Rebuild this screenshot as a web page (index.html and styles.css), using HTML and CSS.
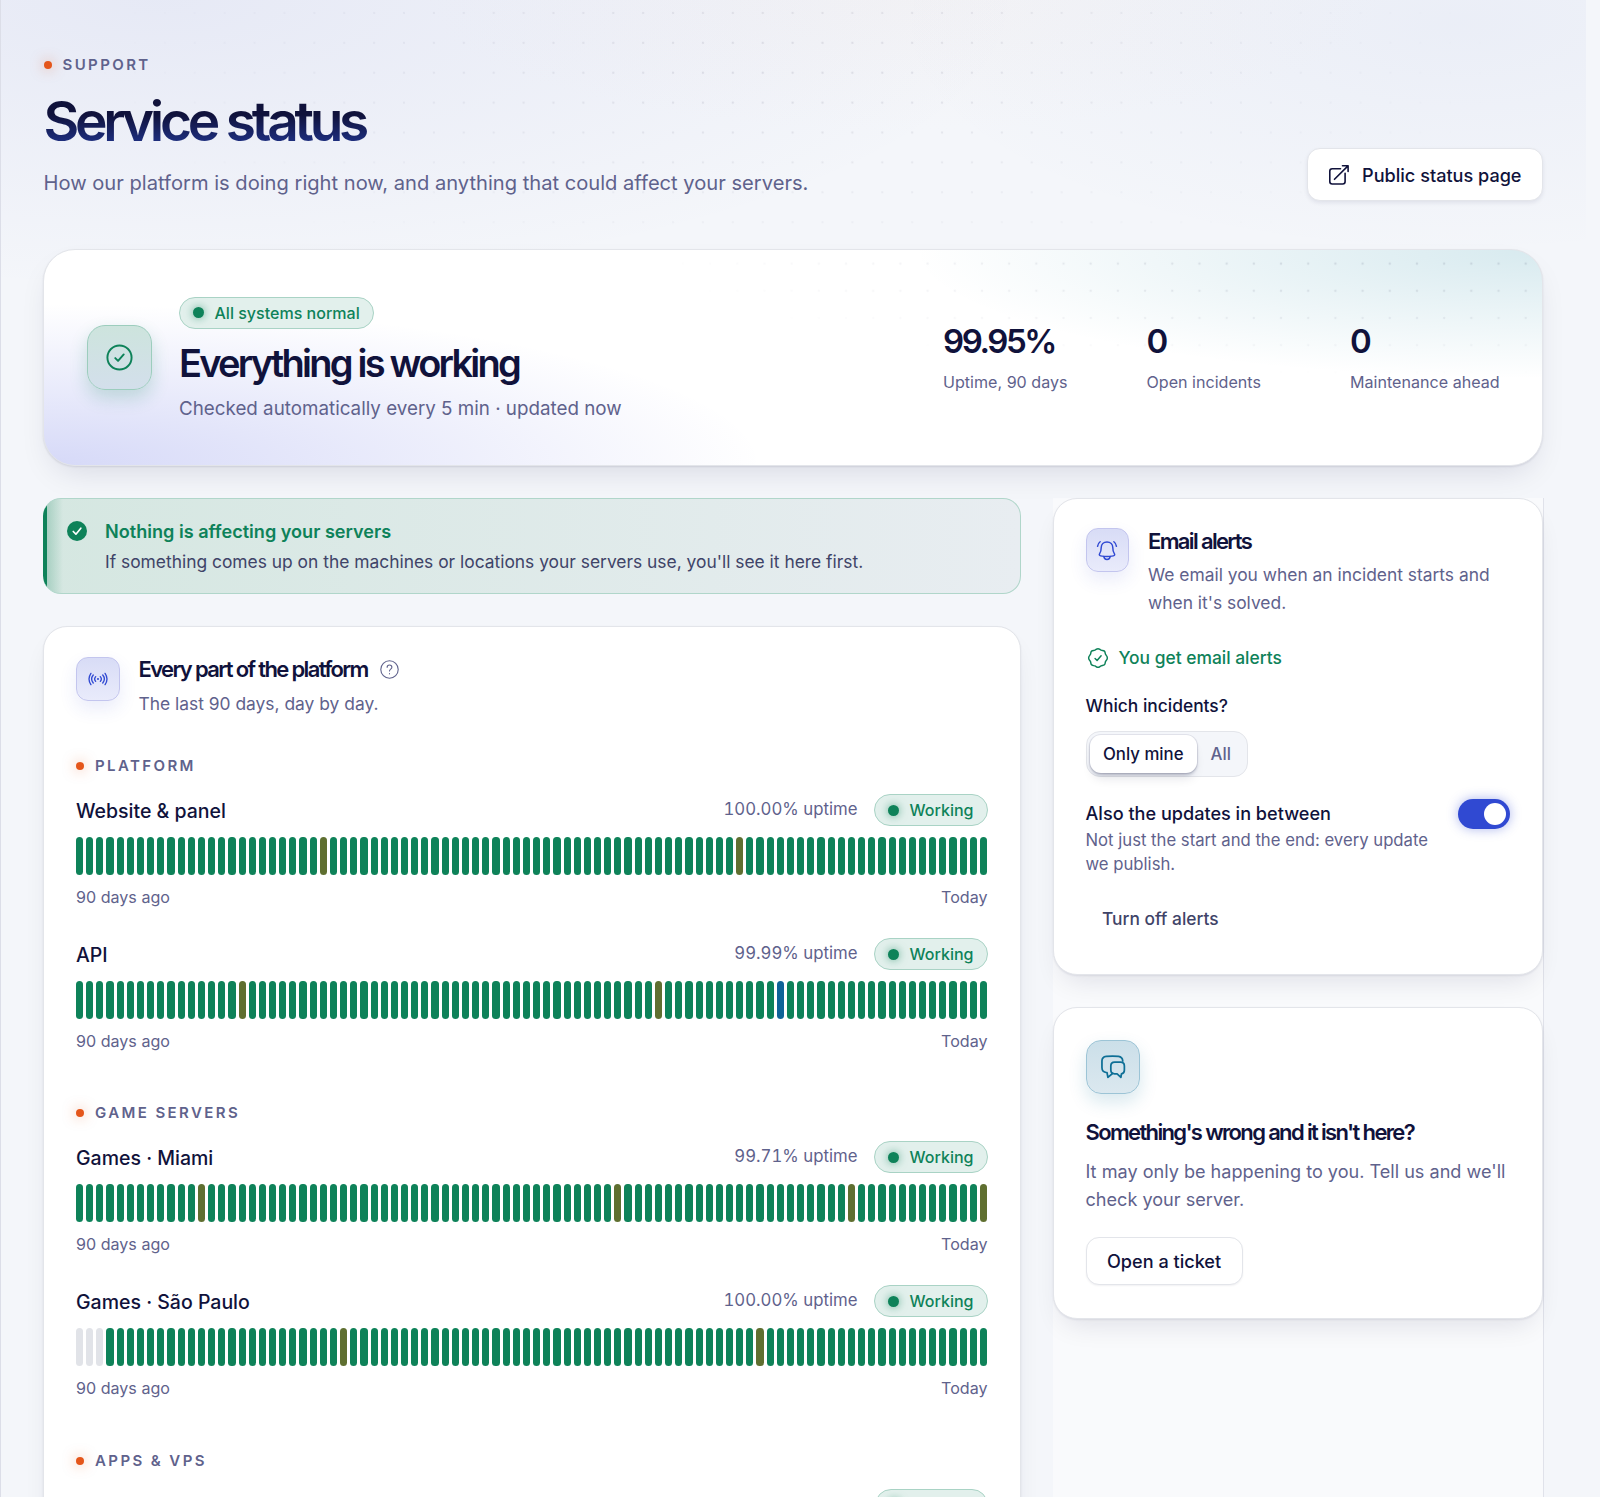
FILE: index.html
```html
<!DOCTYPE html>
<html lang="en">
<head>
  <meta charset="UTF-8" />
  <meta name="viewport" content="width=device-width, initial-scale=1.0" />
  <title>Service status</title>
  <link rel="stylesheet" href="styles.css">
</head>

<body>

<main class="page">

  <!-- Header -->
  <header class="hero">
    <div>
      <p class="eyebrow">Support</p>
      <h1>Service status</h1>
      <p class="lead">How our platform is doing right now, and anything that could affect your servers.</p>
    </div>
    <a class="btn btn-large" href="#">
      <svg class="icon" viewBox="0 0 22 22"><path d="M12.500 4.700H4.200C2.600 4.700 1.800 5.500 1.800 7.100V17.600C1.800 19.200 2.600 20 4.200 20H14.700C16.300 20 17.100 19.200 17.100 17.600V9.300"/><path d="M6.500 15.300 20 1.900M14.500 1.800H20.100V7.400"/></svg>
      Public status page
    </a>
  </header>

  <!-- Overall status -->
  <section class="summary">
    <div class="tile tile-green tile-big">
      <svg class="icon" viewBox="0 0 24 24"><circle cx="12" cy="12" r="10"/><path d="M8.500 12.500 10.800 14.800 15.500 9.500"/></svg>
    </div>
    <div class="summary-text">
      <span class="badge">All systems normal</span>
      <h2>Everything is working</h2>
      <p>Checked automatically every 5 min · updated now</p>
    </div>
    <dl class="stats">
      <div><dd>99.95%</dd><dt>Uptime, 90 days</dt></div>
      <div><dd>0</dd><dt>Open incidents</dt></div>
      <div><dd>0</dd><dt>Maintenance ahead</dt></div>
    </dl>
  </section>

  <div class="columns">
    <div class="main-col">

      <div class="notice">
        <svg class="notice-icon" viewBox="0 0 24 24"><circle cx="12" cy="12" r="12"/><path d="M7.500 12.600 10.700 15.800 16.600 8.600"/></svg>
        <div>
          <strong>Nothing is affecting your servers</strong>
          <p>If something comes up on the machines or locations your servers use, you'll see it here first.</p>
        </div>
      </div>

      <!-- Components -->
      <section class="card platform">
        <div class="card-head">
          <div class="tile tile-blue">
            <svg class="icon" viewBox="0 0 24 24"><circle cx="12" cy="12" r=".5"/><path d="M9.200 9.200c-1.400 1.600-1.400 4 0 5.600M14.800 9.200c1.400 1.600 1.400 4 0 5.600M6.300 7.200c-2.300 2.800-2.300 6.800 0 9.600M17.700 7.200c2.300 2.800 2.300 6.800 0 9.600M3.500 5.200c-2.700 4-2.700 9.600 0 13.600M20.500 5.200c2.700 4 2.700 9.600 0 13.600"/></svg>
          </div>
          <div>
            <h3>Every part of the platform
              <svg class="icon help" viewBox="0 0 24 24"><circle cx="12" cy="12" r="11"/><path d="M9 9.300c0-1.700 1.300-2.900 3-2.900s3 1.200 3 2.800c0 2.300-3 2.400-3 4.700M12 17.200v.3"/></svg>
            </h3>
            <p>The last 90 days, day by day.</p>
          </div>
        </div>

        <div class="group">
          <p class="eyebrow">Platform</p>
          <div class="service" data-name="Website &amp; panel" data-uptime="100.00%" data-degraded="24,65"></div>
          <div class="service" data-name="API" data-uptime="99.99%" data-degraded="16,57" data-maintenance="69"></div>
        </div>
        <div class="group">
          <p class="eyebrow">Game servers</p>
          <div class="service" data-name="Games · Miami" data-uptime="99.71%" data-degraded="12,53,76,89"></div>
          <div class="service" data-name="Games · São Paulo" data-uptime="100.00%" data-degraded="26,67" data-empty="0,1,2"></div>
        </div>
        <div class="group">
          <p class="eyebrow">Apps &amp; VPS</p>
          <div class="service-head"><span class="badge badge-end"></span></div>
        </div>
      </section>
    </div>

    <aside class="side-col">
      <!-- Email alerts -->
      <section class="card alerts">
        <div class="card-head">
          <div class="tile tile-blue">
            <svg class="icon" viewBox="0 0 24 24"><path d="M12 3.200c-3.700 0-6.300 2.700-6.300 6.200 0 3-.3 4.600-1.700 6.500-.8 1.100-.3 2.300 1 2.500 4.500.8 9.500.8 14 0 1.300-.2 1.800-1.400 1-2.500-1.400-1.900-1.700-3.500-1.700-6.500 0-3.500-2.600-6.200-6.300-6.200z"/><path d="M8.500 19c.2 1.900 1.600 3.300 3.500 3.300s3.300-1.400 3.500-3.300M4.500 3C2.900 4.200 1.900 5.900 1.700 8M19.500 3c1.600 1.200 2.600 2.900 2.800 5"/></svg>
          </div>
          <div>
            <h3>Email alerts</h3>
            <p>We email you when an incident starts and when it's solved.</p>
          </div>
        </div>

        <p class="subscribed">
          <svg class="icon" viewBox="0 0 24 24"><path d="M12 1.800c1.500 0 2.100 1.100 3.400 1.600s2.600.1 3.600 1.100.7 2.300 1.200 3.500 2 1.900 2 3.900-1.500 2.700-2 3.900-.1 2.600-1.200 3.600-2.300.7-3.600 1.200-1.900 1.600-3.400 1.600-2.100-1.100-3.400-1.600-2.600-.1-3.600-1.200-.7-2.400-1.200-3.600-2-1.900-2-3.900 1.500-2.700 2-3.900.1-2.500 1.200-3.500 2.300-.6 3.600-1.100S10.500 1.800 12 1.800z"/><path d="M8.800 12.600 11 14.800 15.400 9.500"/></svg>
          You get email alerts
        </p>

        <p class="field-label">Which incidents?</p>
        <div class="segmented">
          <button class="active">Only mine</button>
          <button>All</button>
        </div>

        <div class="switch-row">
          <div>
            <strong>Also the updates in between</strong>
            <p>Not just the start and the end: every update we publish.</p>
          </div>
          <button class="switch" aria-label="Also the updates in between"></button>
        </div>

        <button class="btn-text">Turn off alerts</button>
      </section>

      <!-- Ticket -->
      <section class="card ticket">
        <div class="tile tile-teal">
          <svg class="icon" viewBox="0 0 24 24"><path d="M6.500 17.300C3 16.500 1.800 15.800 1.800 12.500V6.500C1.800 3.500 2.800 2.500 5.800 2.200c3.800-.4 8-.4 11.300 0 2.600.3 3.700 1.200 3.900 4.300M6.500 17.300l.8 4.300 4.500-3.800"/><path d="M13.500 7.500h5.500c2.400 0 3.500 1 3.500 3.500v4c0 2.200-.8 3-2.700 3.300l-.5 3.300-3.500-3.300h-2.300c-2.500 0-3.500-1-3.500-3.500V11c0-2.500 1-3.500 3.500-3.500z"/></svg>
        </div>
        <h3>Something's wrong and it isn't here?</h3>
        <p>It may only be happening to you. Tell us and we'll check your server.</p>
        <a class="btn" href="#">Open a ticket</a>
      </section>
    </aside>
  </div>
</main>

<script>
  const DAYS = 90;

  function days(value) {
    return value ? value.split(',').map(Number) : [];
  }

  // Fill every service with its title row and one bar per day
  document.querySelectorAll('.service').forEach(el => {
    const degraded = days(el.dataset.degraded);
    const maintenance = days(el.dataset.maintenance);
    const empty = days(el.dataset.empty);
    let bars = '';
    for (let i = 0; i < DAYS; i++) {
      let state = '';
      if (degraded.includes(i)) state = 'degraded';
      if (maintenance.includes(i)) state = 'maintenance';
      if (empty.includes(i)) state = 'empty';
      bars += `<i class="${state}"></i>`;
    }
    el.innerHTML = `
      <div class="service-head">
        <span class="service-name">${el.dataset.name}</span>
        <span class="uptime">${el.dataset.uptime} uptime</span>
        <span class="badge">Working</span>
      </div>
      <div class="bars">${bars}</div>
      <div class="range"><span>90 days ago</span><span>Today</span></div>`;
  });
</script>

</body>
</html>
```
FILE: styles.css
```css
* { margin: 0; padding: 0; box-sizing: border-box; }

:root {
  --ink: #10123b;
  --body: #3f4468;
  --muted: #5f628c;
  --green: #0e8259;
  --line: #e3e5ea;
}

html {
  height: 100%;
  overflow: hidden;
}

body {
  height: 100%;
  overflow: hidden;
  font-family: Inter, sans-serif;
  color: var(--ink);
  background: #f4f6fa;
}

.page {
  position: relative;
  border-left: 1px solid #dcdee8;
  padding: 55px 57px 0 42px;
  height: 100%;
  overflow: hidden;
}

/* soft colour behind the header */
.page::before {
  content: "";
  position: absolute;
  inset: 0 14px auto 0;
  height: 290px;
  background:
    radial-gradient(55% 100% at 10% 0%, rgba(60, 75, 190, 0.075), transparent),
    radial-gradient(36% 80% at 92% 8%, rgba(60, 90, 190, 0.05), transparent),
    radial-gradient(30% 45% at 57% 0%, rgba(243, 242, 244, 0.8), transparent);
}

.page::after {
  content: "";
  position: absolute;
  inset: 0 14px auto 0;
  height: 240px;
  background: radial-gradient(circle, rgba(16, 18, 59, 0.09) 1px, transparent 1.6px) -0.5px -2px / 29.9px 29.9px;
  -webkit-mask-image: radial-gradient(50% 100% at 50% 30%, #000 10%, transparent 90%);
  mask-image: radial-gradient(50% 100% at 50% 30%, #000 10%, transparent 90%);
}

.page > * {
  position: relative;
  z-index: 1;
}

.icon {
  width: 22px;
  height: 22px;
  fill: none;
  stroke: currentColor;
  stroke-width: 1.6;
  stroke-linecap: round;
  stroke-linejoin: round;
  flex: none;
}

.eyebrow {
  display: flex;
  align-items: center;
  gap: 11px;
  font-size: 15px;
  line-height: 20px;
  font-weight: 600;
  letter-spacing: 0.16em;
  text-transform: uppercase;
  color: var(--muted);
}

.eyebrow::before {
  content: "";
  width: 8px;
  height: 8px;
  border-radius: 50%;
  background: #e4561b;
  box-shadow: 0 0 13px rgba(228, 86, 27, 0.5);
}

/* Header */
.hero {
  display: flex;
  justify-content: space-between;
  align-items: flex-end;
  height: 146px;
  padding-left: 0.5px;
}

.hero > div {
  align-self: flex-start;
}

h1 {
  margin-top: 14px;
  font-size: 55px;
  line-height: 64px;
  font-weight: 600;
  letter-spacing: -0.077em;
  background: linear-gradient(180deg, #10123b 40%, #233a9a);
  -webkit-background-clip: text;
  background-clip: text;
  color: transparent;
}

.lead {
  margin-top: 14px;
  font-size: 20.14px;
  line-height: 32px;
  color: var(--muted);
}

.btn {
  display: inline-flex;
  align-items: center;
  gap: 12px;
  height: 48px;
  padding: 0 20.5px;
  border: 1px solid var(--line);
  border-radius: 13px;
  background: #fff;
  box-shadow: 0 1px 2px rgba(16, 18, 59, 0.06);
  color: var(--ink);
  font-size: 18.1px;
  font-weight: 500;
  text-decoration: none;
}

.btn-large {
  height: 53px;
  box-shadow: 0 2px 4px rgba(16, 18, 59, 0.08);
}

/* Overall status */
.summary {
  display: flex;
  align-items: center;
  height: 217px;
  margin-top: 48px;
  padding: 0 42.5px;
  border: 1px solid var(--line);
  border-radius: 32px;
  background:
    radial-gradient(48% 75% at 0% 100%, rgba(60, 75, 220, 0.21), transparent),
    radial-gradient(42% 60% at 100% 0%, rgba(20, 130, 160, 0.17), transparent),
    #fff;
  box-shadow: 0 1px 2px rgba(16, 18, 59, 0.1), 0 14px 32px -10px rgba(16, 18, 59, 0.13);
}

.summary::after {
  content: "";
  position: absolute;
  inset: 0;
  border-radius: inherit;
  background: radial-gradient(circle, rgba(16, 18, 59, 0.1) 1px, transparent 1.6px) 0 0 / 27.2px 27.2px;
  -webkit-mask-image: radial-gradient(50% 60% at 90% 0%, #000 20%, transparent);
  mask-image: radial-gradient(50% 60% at 90% 0%, #000 20%, transparent);
}

.tile {
  display: flex;
  align-items: center;
  justify-content: center;
  flex: none;
  width: 43.5px;
  height: 43.5px;
  border: 1px solid;
  border-radius: 12px;
}

.tile-blue {
  color: #3049d2;
  border-color: #c3c5ee;
  background: linear-gradient(180deg, #d8dcf6, #e9ebfb);
  box-shadow: 0 8px 18px rgba(48, 73, 210, 0.1);
}

.platform .tile .icon {
  width: 20px;
  height: 20px;
}

.tile-green {
  color: var(--green);
  border-color: #9ccdbd;
  background: linear-gradient(180deg, #cde4dd, #d3dfeb);
  box-shadow: 0 8px 18px rgba(14, 130, 89, 0.2);
}

.tile-big {
  width: 65px;
  height: 65px;
  border-radius: 18px;
}

.tile-big .icon {
  width: 29px;
  height: 29px;
}

.tile-teal {
  width: 54px;
  height: 54px;
  border-radius: 15px;
  color: #0e6f96;
  border-color: #9cc4d6;
  background: linear-gradient(180deg, #cbdfe9, #dbe8ef);
  box-shadow: 0 8px 18px rgba(14, 111, 150, 0.16);
}

.tile-teal .icon {
  width: 26px;
  height: 26px;
}

.summary-text {
  margin: 5px 0 0 27.5px;
}

.badge {
  display: inline-flex;
  align-items: center;
  gap: 11px;
  height: 32px;
  padding: 0 13px 0 12.5px;
  border: 1px solid #a9d3c5;
  border-radius: 16px;
  background: #e2f0ec;
  color: var(--green);
  font-size: 16.05px;
  font-weight: 500;
}

.badge::before {
  content: "";
  width: 11px;
  height: 11px;
  border-radius: 50%;
  background: var(--green);
  box-shadow: 0 0 9px rgba(14, 130, 89, 0.6);
}

.summary-text h2 {
  margin-top: 10px;
  font-size: 38px;
  line-height: 48px;
  font-weight: 600;
  letter-spacing: -0.073em;
}

.summary-text p {
  margin-top: 8.5px;
  font-size: 18.8px;
  line-height: 28px;
  color: var(--muted);
}

.stats {
  display: flex;
  gap: 54px;
  margin-left: auto;
}

.stats div {
  width: 149.5px;
  white-space: nowrap;
}

.stats dd {
  font-size: 33px;
  line-height: 40px;
  font-weight: 600;
  letter-spacing: -0.073em;
}

.stats dt {
  margin-top: 9px;
  font-size: 16.1px;
  line-height: 24px;
  color: var(--muted);
}

/* Columns */
.columns {
  display: flex;
  gap: 32px;
  margin-top: 32px;
}

.main-col {
  width: 977.5px;
}

.side-col {
  width: 490.5px;
  height: 1100px;
  background: rgba(255, 255, 255, 0.45);
  box-shadow: 1px 0 0 #e0e2ea;
}

/* green edge on the left is painted so the corners clip it */
.notice {
  display: flex;
  gap: 18px;
  height: 96px;
  padding: 19px 24px;
  border: 1px solid #b0d6ca;
  border-left: 0;
  border-radius: 18px;
  background:
    linear-gradient(90deg, var(--green) 4px, rgba(14, 130, 89, 0.22) 4.5px, transparent 20px),
    linear-gradient(90deg, #d5e7e1, #e8edf1);
}

.notice-icon {
  flex: none;
  width: 20px;
  height: 20px;
  margin-top: 3px;
  fill: var(--green);
}

.notice-icon path {
  fill: none;
  stroke: #fff;
  stroke-width: 2;
  stroke-linecap: round;
  stroke-linejoin: round;
}

.notice strong {
  display: block;
  font-size: 18.1px;
  line-height: 27px;
  font-weight: 600;
  color: var(--green);
}

.notice p {
  margin-top: 3px;
  font-size: 17.4px;
  line-height: 28px;
  color: var(--body);
}

.card {
  padding: 30px 32px;
  border: 1px solid var(--line);
  border-radius: 24px;
  background: #fff;
  box-shadow: 0 1px 2px rgba(16, 18, 59, 0.08), 0 14px 28px -10px rgba(16, 18, 59, 0.12);
}

.platform {
  margin-top: 32px;
  height: 1000px;
}

.card-head {
  display: flex;
  gap: 19px;
}

.card h3 {
  font-size: 22px;
  line-height: 28px;
  font-weight: 600;
  letter-spacing: -0.075em;
}

.platform h3 {
  margin-top: -2px;
}

.help {
  width: 19px;
  height: 19px;
  margin-left: 8px;
  vertical-align: -1.5px;
  stroke-width: 1.4;
  color: var(--muted);
}

.card-head p,
.ticket p {
  margin-top: 6px;
  font-size: 17.4px;
  line-height: 28px;
  color: var(--muted);
}

.platform .card-head p {
  margin-top: 7px;
}

.group {
  display: flex;
  flex-direction: column;
  gap: 18px;
  margin-top: 49.4px;
}

.card-head + .group {
  margin-top: 38px;
}

.service + .service {
  margin-top: 10px;
}

.service-head {
  display: flex;
  align-items: center;
  height: 32px;
}

.service-name {
  margin-top: 2px;
  font-size: 19.5px;
  font-weight: 500;
}

.uptime {
  margin-top: -2px;
  margin-left: auto;
  margin-right: 16.5px;
  font-size: 16.8px;
  font-variant-numeric: tabular-nums;
  color: var(--muted);
}

.badge-end {
  width: 112.5px;
  margin-left: auto;
}

.bars {
  display: flex;
  gap: 3px;
  height: 38px;
  margin-top: 11px;
}

.bars i {
  flex: 1;
  border-radius: 3.5px;
  background: var(--green);
}

.bars .degraded { background: #5f6f30; }
.bars .maintenance { background: #0f6398; }
.bars .empty { background: #e1e3e8; }

.range {
  display: flex;
  justify-content: space-between;
  margin-top: 10px;
  font-size: 16.1px;
  line-height: 25px;
  color: var(--muted);
}

/* Email alerts */
.alerts {
  height: 477px;
  padding-top: 29px;
}

.alerts h3 {
  margin-top: -1px;
}

.subscribed {
  display: flex;
  align-items: center;
  gap: 10px;
  margin-top: 28px;
  padding-left: 1px;
  font-size: 17.4px;
  line-height: 26px;
  font-weight: 500;
  color: var(--green);
}

.field-label {
  margin-top: 22px;
  font-size: 17.4px;
  line-height: 26px;
  font-weight: 500;
}

.segmented {
  display: flex;
  width: max-content;
  margin-top: 12px;
  padding: 3px;
  height: 46px;
  border: 1px solid var(--line);
  border-radius: 14px;
  background: #f4f6fa;
}

.segmented button {
  padding: 0 13.5px;
  border: 0;
  border-radius: 11px;
  background: none;
  font: 500 16.8px Inter, sans-serif;
  color: var(--muted);
}

.segmented .active {
  background: #fff;
  color: var(--ink);
  box-shadow: 0 0 0 1px rgba(16, 18, 59, 0.08), 0 2px 3px rgba(16, 18, 59, 0.2), 0 8px 12px -4px rgba(16, 18, 59, 0.14);
}

.switch-row {
  display: flex;
  justify-content: space-between;
  margin-top: 22px;
}

.switch-row div {
  width: 350px;
}

.switch-row strong {
  display: block;
  font-size: 18.1px;
  line-height: 28px;
  font-weight: 500;
}

.switch-row p {
  margin-top: 2px;
  font-size: 16.7px;
  line-height: 23.5px;
  color: var(--muted);
}

.switch {
  width: 52px;
  height: 30px;
  padding: 4px;
  border: 0;
  border-radius: 15px;
  background: #3049d2;
  box-shadow: 0 0 12px rgba(48, 73, 210, 0.4);
}

.switch::before {
  content: "";
  display: block;
  width: 22px;
  height: 22px;
  margin-left: auto;
  border-radius: 50%;
  background: #fff;
}

.btn-text {
  margin-top: 20.5px;
  padding: 0 16.5px;
  height: 44px;
  border: 0;
  background: none;
  font: 500 17.35px Inter, sans-serif;
  color: var(--body);
}

/* Ticket */
.ticket {
  height: 312px;
  margin-top: 32px;
  padding-top: 32px;
}

.ticket h3 {
  margin-top: 24px;
}

.ticket p {
  margin: 11px 0 24px;
  font-size: 18.1px;
}
```
